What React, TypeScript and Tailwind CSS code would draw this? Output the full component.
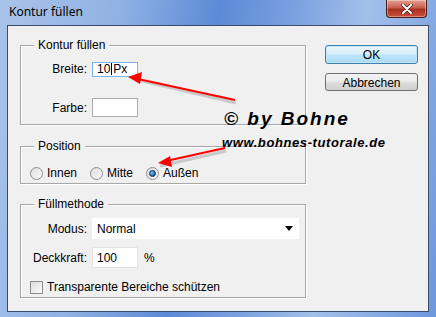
import React from 'react';

// Vista style "Kontur füllen" dialog (Photoshop stroke dialog)

const font = { fontFamily: '"Liberation Sans", Arial, sans-serif' };

function GroupBox({ title, className, children }: { title: string; className: string; children: React.ReactNode }) {
  return (
    <div className={`relative border border-[#a7a7a7] shadow-[inset_1px_1px_0_#ffffff,1px_1px_0_#ffffff] ${className}`}>
      <span className="absolute -top-[8px] left-[13px] bg-[#f0f0f0] px-[4px] leading-[14px]">{title}</span>
      {children}
    </div>
  );
}

function Radio({ checked, label }: { checked?: boolean; label: string }) {
  return (
    <label className="flex items-center gap-[4px]">
      <span className="flex h-[13px] w-[13px] items-center justify-center rounded-full border border-[#8e8f8f] bg-gradient-to-br from-[#dcdcdc] to-[#fbfbfb]">
        {checked && (
          <span className="h-[7px] w-[7px] rounded-full border border-[#0d2b52] bg-[radial-gradient(circle_at_35%_35%,#8fd0f6,#1c6fbf_60%,#0a3d7a)]" />
        )}
      </span>
      <span>{label}</span>
    </label>
  );
}

export default function App() {
  return (
    <div
      className="relative flex h-[317px] w-[436px] flex-col overflow-hidden bg-[linear-gradient(100deg,#a9c4ea_0%,#8fb1e4_25%,#5d8ad6_45%,#7aa0df_60%,#a3c0ea_75%,#6d97dc_100%)] text-[12px] text-black"
      style={font}
    >
      {/* title bar */}
      <div className="flex h-[25px] items-start justify-between pl-[9px] pr-[9px]">
        <span className="mt-[5px] text-[12px] leading-[14px] text-black" style={{ fontFamily: '"Noto Sans", Arial, sans-serif' }}>
          Kontur füllen
        </span>
        <button className="flex h-[18px] w-[41px] items-center justify-center rounded-b-[4px] border border-t-0 border-[#4a1f1a] bg-[linear-gradient(#e3a192,#c8604f_45%,#a8301f_55%,#c8503c)] shadow-[inset_0_0_0_1px_rgba(255,255,255,0.35)]">
          <svg width="12" height="10" viewBox="0 0 12 10">
            <path d="M2 1 L10 9 M10 1 L2 9" stroke="#4a1f1a" strokeWidth="3.4" strokeLinecap="round" />
            <path d="M2 1 L10 9 M10 1 L2 9" stroke="#ffffff" strokeWidth="2" strokeLinecap="round" />
          </svg>
        </button>
      </div>

      {/* client area */}
      <div className="mx-[7px] h-[287px] border border-[#3b4c6b] bg-[#f0f0f0]">
        <div className="flex pl-[12px] pt-[19px]">
          <div className="flex w-[286px] flex-col">
            <GroupBox title="Kontur füllen" className="h-[80px]">
              <div className="grid grid-cols-[66px_auto] items-center gap-x-[5px] pt-[14px]">
                <span className="text-right">Breite:</span>
                <div className="flex h-[15px] w-[46px] items-center border border-[#7eb4ea] bg-white pl-[4px] leading-[13px]">
                  10<span className="mx-[1px] h-[12px] w-px bg-black" />Px
                </div>
                <span className="mt-[20px] text-right">Farbe:</span>
                <div className="mt-[20px] h-[19px] w-[46px] border border-[#abadb3] bg-white" />
              </div>
            </GroupBox>

            <GroupBox title="Position" className="mt-[21px] h-[38px]">
              <div className="flex items-center pl-[9px] pt-[17px]">
                <Radio label="Innen" />
                <div className="ml-[13px]"><Radio label="Mitte" /></div>
                <div className="ml-[13px]"><Radio checked label="Außen" /></div>
              </div>
            </GroupBox>

            <GroupBox title="Füllmethode" className="mt-[20px] h-[94px]">
              <div className="grid grid-cols-[66px_auto] items-center gap-x-[5px] pt-[13px]">
                <span className="text-right">Modus:</span>
                <div className="flex h-[21px] w-[207px] items-center justify-between bg-white pl-[5px] pr-[6px]">
                  <span>Normal</span>
                  <svg width="8" height="5" viewBox="0 0 8 5"><path d="M0 0 H8 L4 5 Z" fill="#000" /></svg>
                </div>
                <span className="mt-[8px] text-right">Deckkraft:</span>
                <div className="mt-[8px] flex items-center gap-[6px]">
                  <div className="flex h-[21px] w-[46px] items-center border border-[#e3e3e3] bg-white pl-[4px]">100</div>
                  <span>%</span>
                </div>
              </div>
              <label className="mt-[10px] flex items-center gap-[4px] pl-[9px]">
                <span className="h-[13px] w-[13px] border border-[#8e8f8f] bg-gradient-to-br from-[#dcdcdc] to-[#fbfbfb]" />
                <span>Transparente Bereiche schützen</span>
              </label>
            </GroupBox>
          </div>

          <div className="ml-[19px] flex flex-col">
            <button className="h-[19px] w-[93px] rounded-[3px] border border-[#3c7fb1] bg-[linear-gradient(#eaf6fd,#d9f0fc_45%,#bee6fd_55%,#a7d9f5)] shadow-[inset_0_0_0_1px_#c4e5f6]">
              OK
            </button>
            <button className="mt-[9px] h-[18px] w-[93px] rounded-[3px] border border-[#707070] bg-[linear-gradient(#f2f2f2,#ebebeb_45%,#dddddd_55%,#cfcfcf)]">
              Abbrechen
            </button>
          </div>
        </div>
      </div>

      {/* watermark */}
      <div className="pointer-events-none absolute left-[224px] top-[108px] text-[19px] font-bold italic leading-[22px] tracking-[2px]" style={font}>
        © by Bohne
      </div>
      <div className="pointer-events-none absolute left-[222px] top-[136px] text-[13px] font-bold italic leading-[14px] tracking-[0.6px]" style={font}>
        www.bohnes-tutorale.de
      </div>

      {/* red arrows */}
      <svg className="pointer-events-none absolute left-0 top-0" width="436" height="317" viewBox="0 0 436 317">
        <g stroke="#9a9a9a" strokeWidth="3" opacity="0.45" fill="none">
          <path d="M142 81 L236 103" />
          <path d="M160 166 L226 151" />
        </g>
        <path d="M138 79 L235 100" stroke="#ff0000" strokeWidth="2" />
        <path d="M128 77 L142 72 L140 84 Z" fill="#ff0000" />
        <path d="M166 161 L225 148" stroke="#ff0000" strokeWidth="2" />
        <path d="M158 163 L170 156 L172 167 Z" fill="#ff0000" />
      </svg>
    </div>
  );
}
